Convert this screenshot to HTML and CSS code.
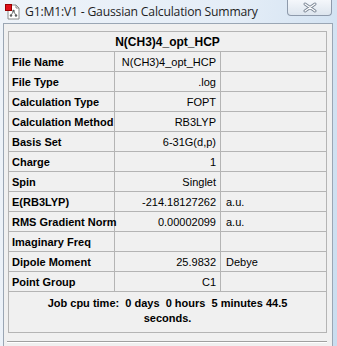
FILE: index.html
```html
<!DOCTYPE html>
<html lang="en">
<head>
  <meta charset="UTF-8">
  <title>Gaussian Calculation Summary</title>
  <link rel="stylesheet" href="styles.css">
</head>
<body>

<div class="window">
  <div class="titlebar">
    <svg class="app-icon" width="16" height="16" viewBox="0 0 16 16">
      <path d="M3 1h8l3 3v11H3z" fill="#fff" stroke="#8a8a8a"/>
      <path d="M11 1v3h3" fill="none" stroke="#8a8a8a"/>
      <circle cx="8.5" cy="7" r="1.2" fill="#555"/>
      <circle cx="6" cy="11.5" r="1.2" fill="#555"/>
      <circle cx="11" cy="11.5" r="1.2" fill="#555"/>
      <path d="M8.5 7L6 11.5M8.5 7l2.5 4.5" stroke="#777"/>
      <rect x="0.5" y="0.5" width="6" height="6" fill="#e0101a" stroke="#900"/>
    </svg>
    <span class="title">G1:M1:V1 - Gaussian Calculation Summary</span>
    <div class="close-btn">
      <svg width="14" height="11" viewBox="0 0 14 11">
        <path d="M2 2l10 7M12 2L2 9" stroke="#7a8594" stroke-width="3" stroke-linecap="round"/>
        <path d="M2 2l10 7M12 2L2 9" stroke="#fff" stroke-width="1.2" stroke-linecap="round"/>
      </svg>
    </div>
  </div>

  <div class="client">
    <table class="summary">
      <tr><th colspan="3" class="head">N(CH3)4_opt_HCP</th></tr>
      <tr><td class="lbl">File Name</td><td class="val">N(CH3)4_opt_HCP</td><td class="unit"></td></tr>
      <tr><td class="lbl">File Type</td><td class="val">.log</td><td class="unit"></td></tr>
      <tr><td class="lbl">Calculation Type</td><td class="val">FOPT</td><td class="unit"></td></tr>
      <tr><td class="lbl">Calculation Method</td><td class="val">RB3LYP</td><td class="unit"></td></tr>
      <tr><td class="lbl">Basis Set</td><td class="val">6-31G(d,p)</td><td class="unit"></td></tr>
      <tr><td class="lbl">Charge</td><td class="val">1</td><td class="unit"></td></tr>
      <tr><td class="lbl">Spin</td><td class="val">Singlet</td><td class="unit"></td></tr>
      <tr><td class="lbl">E(RB3LYP)</td><td class="val">-214.18127262</td><td class="unit">a.u.</td></tr>
      <tr><td class="lbl">RMS Gradient Norm</td><td class="val">0.00002099</td><td class="unit">a.u.</td></tr>
      <tr><td class="lbl">Imaginary Freq</td><td class="val"></td><td class="unit"></td></tr>
      <tr><td class="lbl">Dipole Moment</td><td class="val">25.9832</td><td class="unit">Debye</td></tr>
      <tr><td class="lbl">Point Group</td><td class="val">C1</td><td class="unit"></td></tr>
      <tr><td colspan="3" class="foot">Job cpu time:&nbsp; 0 days&nbsp; 0 hours&nbsp; 5 minutes 44.5<br>seconds.</td></tr>
    </table>
    <div class="separator"></div>
  </div>
</div>

</body>
</html>
```

FILE: styles.css
```css
* { box-sizing: border-box; }
body { margin: 0; padding: 0; background: #e6eef7; font-family: "Liberation Sans", Arial, sans-serif; }

.window { width: 337px; height: 346px; overflow: hidden;
  background: linear-gradient(100deg, #eef3f9 0%, #e4edf7 60%, #d4e3f2 85%, #c9ddef 100%); }

.titlebar { height: 23px; display: flex; align-items: flex-start; position: relative; }
.app-icon { margin: 4px 0 0 5px; flex-shrink: 0; }
.title { font-family: "Open Sans", "Noto Sans", sans-serif; font-size: 12.2px; color: #1e1e1e; margin: 3px 0 0 4px; white-space: nowrap; letter-spacing: -0.2px; }
.close-btn { margin-left: auto; margin-right: 5px; width: 45px; height: 16px; border: 1px solid #8e9aab; border-top: none;
  border-radius: 0 0 4px 4px; background: linear-gradient(#f4f7fb, #dde5ee); display: flex; align-items: center; justify-content: center; }

.client { margin: 0 4px 0 3px; height: 323px; background: #f0f0f0; border: 1px solid #9aa6b4; border-bottom: none;
  padding: 7px 5px 0 4px; }

.summary { width: 319px; border-collapse: collapse; border: 1px solid #8c8c8c; font-size: 11px; color: #000; table-layout: fixed; }
.summary td, .summary th { border: 1px solid #b4b4b4; height: 20px; padding: 0; }
.summary .head { font-size: 12px; font-weight: bold; text-align: center; height: 20px; }
.lbl { width: 139px; font-weight: bold; padding-left: 3px !important; white-space: nowrap; }
.val { width: 116px; text-align: right; padding-right: 4px !important; white-space: nowrap; }
.unit { padding-left: 5px !important; }
.summary .foot { font-weight: bold; text-align: center; height: 41px; line-height: 15px; padding-bottom: 3px; }

.separator { margin: 8px 0 0 -1px; width: 320px; border-top: 1px solid #a0a0a0; border-bottom: 1px solid #fff; }
```
